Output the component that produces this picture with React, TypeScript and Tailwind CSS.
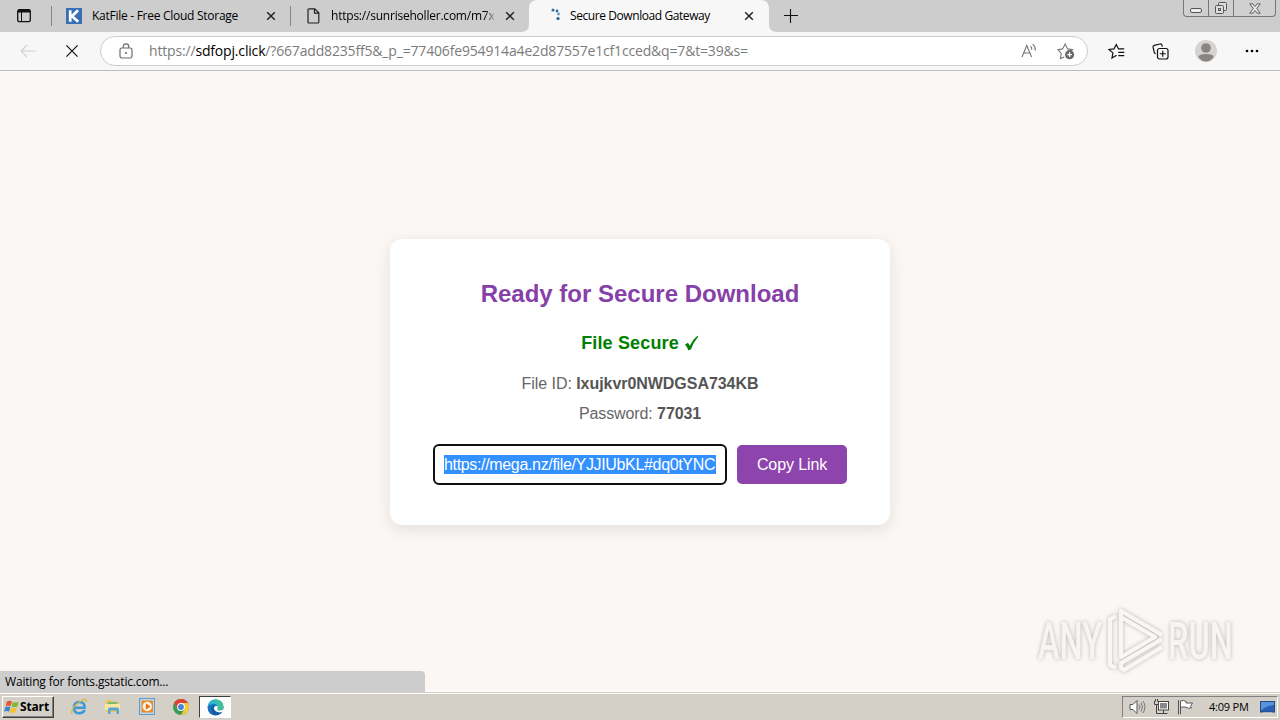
import React from "react";

const UI = "font-['Open_Sans','Noto_Sans',sans-serif]";

function TabClose() {
  return (
    <svg width="10" height="10" viewBox="0 0 10 10" className="shrink-0">
      <path d="M1.2 1.2l7.6 7.6M8.8 1.2L1.2 8.8" stroke="#222" strokeWidth="1.5" />
    </svg>
  );
}

function TabStrip() {
  return (
    <div className="flex h-8 bg-[#cdcdcd] pb-px">
      <div className="flex h-[31px] w-[51px] items-center pl-[17px]">
        <svg width="14" height="15" viewBox="0 0 14 15" fill="none">
          <rect x=".7" y="1.700" width="12.600" height="12" rx="1.600" stroke="#111" strokeWidth="1.300" />
          <path d="M1 3.200h12" stroke="#111" strokeWidth="2.600" />
          <path d="M4.500 4v9.500" stroke="#111" strokeWidth="1" />
        </svg>
      </div>
      <div className="mt-1.5 h-5 w-px bg-[#858585]" />
      <div className="flex h-[31px] w-[238px] items-center pl-3.5">
        <svg width="16" height="16" viewBox="0 0 16 16" className="shrink-0">
          <rect width="16" height="16" fill="#3a6fb5" />
          <path d="M4.200 2.200v11.600M12 2.200L6 8.200l6.200 5.600" stroke="#fff" strokeWidth="2.700" fill="none" />
        </svg>
        <span className={`${UI} ml-2.5 w-[174px] whitespace-nowrap text-[12px] leading-4 tracking-[-0.27px] text-black`}>KatFile - Free Cloud Storage</span>
        <TabClose />
      </div>
      <div className="mt-1.5 h-5 w-px bg-[#858585]" />
      <div className="flex h-[31px] w-[238px] items-center pl-4">
        <svg width="13" height="16" viewBox="0 0 13 16" fill="none" className="shrink-0">
          <path d="M1.500.8h6.300l4 4v9.200q0 1-1 1H2q-1 0-1-1V1.800q0-1 1-1M7.500 1v4.200h4.200" stroke="#222" strokeWidth="1.200" />
        </svg>
        <span className={`${UI} ml-[11px] w-[165px] whitespace-nowrap bg-gradient-to-r from-black from-[92%] to-[#cdcdcd] bg-clip-text text-[12px] leading-4 tracking-[-0.22px] text-transparent`}>https://sunriseholler.com/m7x</span>
        <span className="ml-[9px] flex"><TabClose /></span>
      </div>
      <div className="relative flex h-8 w-[240px] items-center rounded-t-lg bg-[#f7f7f7] pb-px pl-[21px]">
        <svg className="absolute -left-2 bottom-0" width="8" height="8" viewBox="0 0 8 8"><path d="M8 0v8H0q8 0 8-8" fill="#f7f7f7" /></svg>
        <svg className="absolute -right-2 bottom-0" width="8" height="8" viewBox="0 0 8 8"><path d="M0 0v8h8Q0 8 0 0" fill="#f7f7f7" /></svg>
        <svg width="16" height="16" viewBox="0 0 16 16" className="shrink-0 -translate-y-px">
          <circle cx="1" cy="5" r="1.200" fill="#e4eff7" />
          <circle cx="3" cy="3" r="1.500" fill="#2f6ea4" />
          <circle cx="7" cy="4" r="1.400" fill="#2f6ea4" />
          <circle cx="8.500" cy="7" r="1.400" fill="#5f9ac4" />
          <circle cx="8" cy="11.500" r="1.600" fill="#205f98" />
        </svg>
        <span className={`${UI} ml-1 w-[174px] whitespace-nowrap text-[12px] leading-4 tracking-[-0.42px] text-black`}>Secure Download Gateway</span>
        <TabClose />
      </div>
      <div className="flex h-[31px] flex-1 items-center pl-[15px]">
        <svg width="14" height="14" viewBox="0 0 14 14"><path d="M6.500 0v14M0 6.500h14" stroke="#111" strokeWidth="1.100" /></svg>
      </div>
      <div className="mr-1 flex h-[17px] w-[93px] rounded-b border border-t-0 border-[#777] bg-[#d0d0d0]">
        <div className="flex w-[25px] items-end justify-center border-r border-[#777] pb-[3px]">
          <svg width="13" height="5"><rect x=".5" y=".5" width="11" height="4" rx="1.500" fill="#eee" stroke="#555" /></svg>
        </div>
        <div className="flex w-[25px] items-center justify-center border-r border-[#777]">
          <svg width="14" height="14" viewBox="0 0 14 14" fill="#ddd" stroke="#555"><rect x="4.500" y="1.500" width="8" height="8" rx="1" /><rect x="1.500" y="4.500" width="8" height="8" rx="1" /><rect x="4.500" y="7.500" width="2" height="2" /></svg>
        </div>
        <div className="flex flex-1 items-center justify-center">
          <svg width="12" height="11" viewBox="0 0 12 11"><path d="M.8.8h3L6 3.500 8.200.8h3L7.800 5.500l3.400 4.700h-3L6 7.500l-2.200 2.700h-3L4.200 5.500z" fill="#e6e6e6" stroke="#555" strokeWidth=".9" /></svg>
        </div>
      </div>
    </div>
  );
}

function Toolbar() {
  return (
    <div className="flex h-[39px] items-center border-b border-[#bdbdc0] bg-[#f7f7f7]">
      <svg width="16" height="14" viewBox="0 0 16 14" className="ml-5" fill="none" stroke="#d0d0d0" strokeWidth="1.100"><path d="M15.500 7H1M7 1L1 7l6 6" /></svg>
      <svg width="12" height="12" viewBox="0 0 12 12" className="ml-[30px]" stroke="#111" strokeWidth="1.200"><path d="M.4.4l11.200 11.200M11.600.4L.4 11.600" /></svg>
      <div className="ml-[22px] flex h-[30px] w-[988px] items-center rounded-full border border-[#cccccc] bg-white pl-[18px]">
        <svg width="14" height="16" viewBox="0 0 14 16" fill="none" stroke="#6b6b6b" className="shrink-0"><rect x="1" y="5" width="12" height="10" rx="1.800" strokeWidth="1.200" /><path d="M4.300 5V3.300q0-2.500 2.700-2.500t2.700 2.500V5" strokeWidth="1.200" /><circle cx="7" cy="10" r="1" fill="#666" stroke="none" /></svg>
        <span className={`${UI} ml-4 w-[872px] whitespace-nowrap text-[14px] leading-5 tracking-[-0.17px] text-[#7b7b7b]`}>https://<span className="text-black">sdfopj.click</span>/?667add8235ff5&amp;_p_=77406fe954914a4e2d87557e1cf1cced&amp;q=7&amp;t=39&amp;s=</span>
        <svg width="17" height="16" viewBox="0 0 17 16" fill="none" stroke="#777" strokeWidth="1.100" className="shrink-0"><path d="M1 14L5.800 2.500 10.600 14M2.700 10h6.200M9.500 3.200q1.500 1.500 1.300 3.800M11.700 1.200q3 2.600 2.600 6.300" /></svg>
        <svg width="18" height="18" viewBox="0 0 18 18" className="ml-[19px] shrink-0" fill="none"><path d="M7.200 15l-3.800 1.600.8-5.100L.9 7.700l4.700-.8L8.200 2l2.400 4.900 4.900.8-1.800 1.500" stroke="#777" strokeWidth="1.100" /><circle cx="12.600" cy="12.700" r="4.600" fill="#6a6a6a" /><path d="M12.600 10.300v4.800M10.200 12.700H15" stroke="#fff" strokeWidth="1.200" /></svg>
      </div>
      <svg width="17" height="17" viewBox="0 0 17 17" className="ml-5" fill="none" stroke="#111" strokeWidth="1.200"><path d="M8.500 12.300l-4.500 2.700.9-5.100L1 6.500l5-.6L8.300 1.500l2.200 4.400h5.700M10.200 9.300h6.100M10.200 12.700h6.100" /></svg>
      <svg width="17" height="17" viewBox="0 0 17 17" className="ml-[27px]" fill="none" stroke="#111" strokeWidth="1.200"><path d="M3.600 10.800L2.400 9.800 1 4.200Q.8 2.700 2.300 2.300L8 1q1.500-.3 2 1.200l.4 1.500" /><rect x="5.500" y="5.500" width="10.500" height="10.500" rx="2" /><path d="M10.750 7.800v6M7.800 10.750h6" /></svg>
      <svg width="22" height="22" viewBox="0 0 22 22" className="ml-[26px]"><circle cx="11" cy="11" r="11" fill="#d5d3d1" /><circle cx="11" cy="8" r="4.800" fill="#898582" /><path d="M3.500 17.300q0-3.300 7.500-3.300t7.500 3.300q-3 4.200-7.500 4.200t-7.500-4.200" fill="#898582" /></svg>
      <svg width="14" height="4" viewBox="0 0 14 4" className="ml-7"><circle cx="2" cy="2" r="1.350" /><circle cx="7" cy="2" r="1.350" /><circle cx="12" cy="2" r="1.350" /></svg>
    </div>
  );
}

function DownloadCard() {
  return (
    <main className="absolute left-[390px] top-[168px] flex h-[286px] w-[500px] flex-col items-center rounded-xl bg-white pt-[41px] shadow-[0_4px_15px_rgba(0,0,0,0.1)]">
      <h1 className="whitespace-nowrap text-[24px] font-bold leading-7 tracking-[0px] text-[#8641a8]">Ready for Secure Download</h1>
      <p className="mt-[25px] flex items-center whitespace-nowrap text-[18px] font-bold leading-5 tracking-[0.15px] text-[#008000]">
        File Secure
        <svg width="15" height="16" viewBox="0 0 14 16" className="ml-[5px]"><path d="M.5 9.500l3-1.800 1.800 3Q8 5 12.900.8l.9.7Q8.800 7.500 6.300 14.500l-2.500.7Q2.500 11.500.5 9.500" fill="#008000" /></svg>
      </p>
      <p className="mt-[21px] whitespace-nowrap text-[16px] leading-5 tracking-[-0.05px] text-[#666]">File ID: <b className="text-[#555]">lxujkvr0NWDGSA734KB</b></p>
      <p className="mt-2.5 whitespace-nowrap text-[16px] leading-5 tracking-[-0.1px] text-[#666]">Password: <b className="text-[#555]">77031</b></p>
      <div className="mt-5 flex items-center gap-2.5">
        <div className="flex h-[41px] w-[294px] items-center rounded-md border-2 border-[#101010] pl-[9px]">
          <span className="w-[272px] whitespace-nowrap bg-[#3390ff] text-[16px] leading-[19px] tracking-[-0.34px] text-white">https://mega.nz/file/YJJIUbKL#dq0tYNC</span>
        </div>
        <button className="h-[39px] w-[110px] rounded-[5px] bg-[#8e44ad] text-[16px] leading-5 tracking-[-0.1px] text-white">Copy Link</button>
      </div>
    </main>
  );
}

function Watermark() {
  return (
    <svg className="absolute left-[1030px] top-[532px] drop-shadow-[0_0_2px_rgba(90,90,90,0.4)]" width="215" height="75" viewBox="0 0 215 75">
      <g fill="#f6f5f2" fontFamily="Roboto, sans-serif" fontWeight="500" fontSize="52">
        <text x="8" y="56" textLength="64" lengthAdjust="spacingAndGlyphs">ANY</text>
        <text x="138" y="56" textLength="65" lengthAdjust="spacingAndGlyphs">RUN</text>
      </g>
      <g fill="none" stroke="#f8f7f4" strokeWidth="4" strokeLinejoin="round">
        <path d="M86 13l-6 3v46l6 3" />
        <path d="M132 32L91 8v46l34-20-34-20" />
        <path d="M132 36L91 60v5l3 2 38-23" />
      </g>
    </svg>
  );
}

function Taskbar() {
  return (
    <footer className="flex h-[28px] items-center border-t border-[#d4d0c8] bg-[#d4d0c8] shadow-[inset_0_1px_0_#fff]">
      <div className="ml-0.5 mt-px flex h-[22px] w-[52px] items-center border border-b-[#404040] border-l-white border-r-[#404040] border-t-white pl-px shadow-[inset_-1px_-1px_0_#808080]">
        <svg width="16" height="16" viewBox="0 0 16 16" className="shrink-0">
          <path d="M3 2.500q2.500-1.500 5 0L6.700 7q-2.500-1.200-5 0z" fill="#e8552b" />
          <path d="M8.900 3q2.500 1.200 5.800 0l-1.400 4.500q-2.800 1.200-5.700 0z" fill="#78b83b" />
          <path d="M1.400 8q2.500-1.200 5 0l-1.300 4.700q-2.500-1.400-5.100 0z" fill="#3f83cc" />
          <path d="M7.300 8.600q2.700 1.200 5.700 0l-1.400 4.700q-2.800 1.300-5.700 0z" fill="#f5c32c" />
        </svg>
        <span className={`${UI} whitespace-nowrap text-[12px] font-bold leading-4 tracking-[-0.15px] text-black`}>Start</span>
      </div>
      <svg width="18" height="18" viewBox="0 0 18 18" className="ml-4" fill="none">
        <path d="M14.800 12q-1.500 3.200-5.500 3.200-5.300 0-5.300-5.500T9.300 4q5.500 0 5.300 5.700H5" stroke="#3b9bd8" strokeWidth="2.600" />
        <path d="M2.500 16Q.5 15 3 10.500T13.500 1.500q3.500-.8 3 2.500" stroke="#dfb63d" strokeWidth="1.300" />
      </svg>
      <svg width="18" height="17" viewBox="0 0 18 17" className="ml-4">
        <path d="M2 3l1-1h4l1 1.500h7V14H2z" fill="#e8c65a" />
        <path d="M4 4h9v2H4z" fill="#78b878" /><path d="M1 6h15v6H1z" fill="#f7e6a0" />
        <path d="M4 16v-5q0-1.500 1.500-1.500h8Q15 9.500 15 11v5h-2.500v-3.500h-6V16z" fill="#5ba4d5" />
      </svg>
      <svg width="17" height="17" viewBox="0 0 17 17" className="ml-[17px]">
        <rect x=".5" y=".5" width="15" height="16" fill="#b9d5ec" stroke="#5f9dcb" /><rect x="2.500" y="2.500" width="11.500" height="12" rx="1" fill="#f08a20" /><circle cx="8.300" cy="8.500" r="4.700" fill="#fff5e5" /><path d="M6.800 5.200l4.800 3.300-4.800 3.300z" fill="#e9701a" />
      </svg>
      <svg width="16" height="16" viewBox="0 0 16 16" className="ml-[17px]">
        <circle cx="8" cy="8" r="8" fill="#389d50" />
        <path d="M8 8V4h6.930A8 8 0 0 1 8 16l3.500-6z" fill="#f7cb35" />
        <path d="M1.070 4A8 8 0 0 1 14.930 4H8L4.500 10z" fill="#dd4438" />
        <circle cx="8" cy="8" r="3.900" fill="#fff" /><circle cx="8" cy="8" r="2.900" fill="#4285d9" />
      </svg>
      <div className="ml-2.5 mt-px flex h-[22px] w-[32px] items-center justify-center border border-b-white border-l-[#404040] border-r-white border-t-[#404040] bg-[#fcfcfb]">
        <svg width="17" height="17" viewBox="0 0 17 17">
          <circle cx="8.500" cy="8.500" r="8" fill="#1574bd" />
          <path d="M.7 7.500Q2 .5 8.700.5q7 0 7.800 7 0 4-4.500 4-3.500 0-1.500-2.700Q10.500 5 6.500 5 2.500 5 .7 7.500" fill="#32b5cf" />
          <path d="M10 .7q6 1 6.400 6.500.1 4.300-4.400 4.300-3.500 0-1.500-2.700Q11 3 7 1Q9 .3 10 .7" fill="#49c87c" opacity=".65" />
          <path d="M8 6q-3 2-.8 5.500 3 3.500 8 .9Q12 17 6.800 15.800 3 12 4.500 8.500 5.800 6 8 6" fill="#155aa0" />
          <path d="M8 7.200q2.500-.8 2.800 1.200-1.800 3 2 3.200l4-1v2q-6 2-8.800-1-2-2.600 0-4.400" fill="#fcfcfb" />
        </svg>
      </div>
      <div className="ml-auto mr-0.5 mt-px flex h-[22px] w-[156px] items-center border border-b-white border-l-[#808080] border-r-white border-t-[#808080] pl-1.5">
        <svg width="17" height="16" viewBox="0 0 17 16" fill="none" stroke="#555" strokeWidth="1"><path d="M1 5.500h3L8 1.500v13L4 10.500H1z" fill="#fff" /><path d="M10 5.500q1.800 2.500 0 5M12 3.500q3 4.500 0 9M14 2q4 6 0 12" stroke="#777" /></svg>
        <svg width="17" height="16" viewBox="0 0 17 16" className="ml-[7px]" fill="#fff" stroke="#444"><rect x="5.500" y="2.500" width="10" height="8.500" /><rect x="7" y="4" width="7" height="5.500" fill="#888" stroke="none" /><path d="M10.500 11v3M6.500 14.500h8" /><path d="M1.500 2v3.500h4V2M2.500 0v2.500M4.500 0v2.500M3.500 6v8.500H7" fill="none" /></svg>
        <svg width="17" height="16" viewBox="0 0 17 16" className="ml-[7px]" fill="#fff" stroke="#555"><path d="M1.500 1v14.500M3.500 2v13" fill="none" /><path d="M3.500 2q3-1.500 5.500.5V4h6.500l-2 3.500 1 1.500q-3.500.8-5.500-.8-3-.7-5.500.3z" /></svg>
        <span className={`${UI} ml-[15px] w-[51px] whitespace-nowrap text-[11px] leading-4 tracking-[-0.2px] text-black`}>4:09 PM</span>
        <svg width="16" height="13" viewBox="0 0 16 13"><rect x=".5" y=".5" width="14" height="10.500" fill="#285fb5" stroke="#28497b" /><path d="M1 1h13v3Q6 5 2 9H1z" fill="#5794dd" /><path d="M3 12h9" stroke="#ddd" /></svg>
      </div>
    </footer>
  );
}

export default function App() {
  return (
    <div className="flex h-[720px] w-[1280px] flex-col overflow-hidden font-['Liberation_Sans',sans-serif]">
      <TabStrip />
      <Toolbar />
      <div className="relative flex flex-1 flex-col bg-[#faf7f4]">
        <DownloadCard />
        <Watermark />
        <div className="mt-auto h-[21px] w-[425px] rounded-tr bg-[#cdcdcd] pl-[5px]">
          <span className={`${UI} block whitespace-nowrap text-[12px] leading-[21px] tracking-[-0.18px] text-black`}>Waiting for fonts.gstatic.com...</span>
        </div>
      </div>
      <Taskbar />
    </div>
  );
}
